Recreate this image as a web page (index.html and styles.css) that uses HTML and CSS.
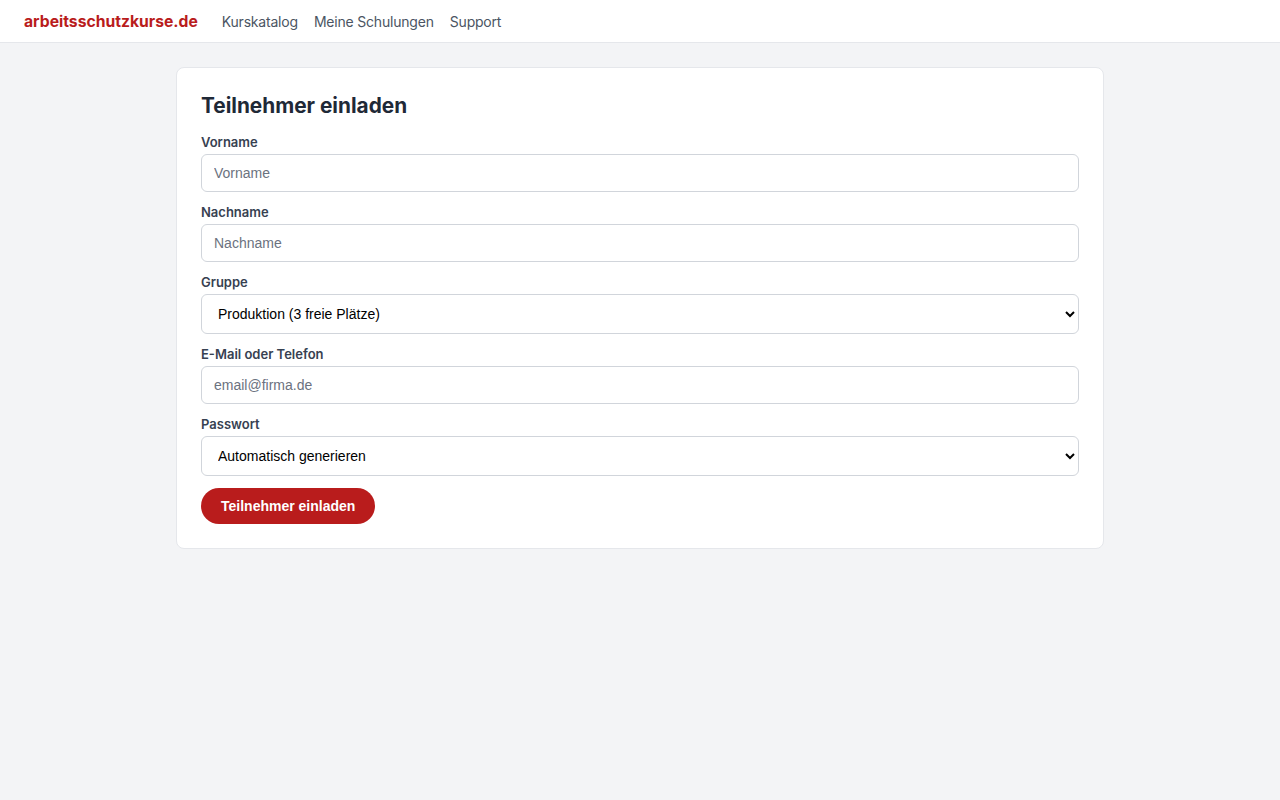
FILE: index.html
```html
<!DOCTYPE html>
<html lang="de">
<head>
<meta charset="utf-8">
<title>Teilnehmer einladen</title>
<link rel="stylesheet" href="styles.css">
</head>
<body>
<header class="topbar">
  <a class="logo" href="#">arbeitsschutzkurse.de</a>
  <nav class="nav">
    <a href="#">Kurskatalog</a>
    <a href="#">Meine Schulungen</a>
    <a href="#">Support</a>
  </nav>
</header>
<main class="main">
  <section class="card">
    <h1 class="title">Teilnehmer einladen</h1>
    <form class="form">
      <div class="field">
        <label class="label">Vorname</label>
        <input class="input" type="text" placeholder="Vorname">
      </div>
      <div class="field">
        <label class="label">Nachname</label>
        <input class="input" type="text" placeholder="Nachname">
      </div>
      <div class="field">
        <label class="label">Gruppe</label>
        <select class="select">
          <option>Produktion (3 freie Plätze)</option>
        </select>
      </div>
      <div class="field">
        <label class="label">E-Mail oder Telefon</label>
        <input class="input" type="text" placeholder="email@firma.de">
      </div>
      <div class="field">
        <label class="label">Passwort</label>
        <select class="select">
          <option>Automatisch generieren</option>
        </select>
      </div>
      <div class="actions">
        <button class="btn" type="button">Teilnehmer einladen</button>
      </div>
    </form>
  </section>
</main>
</body>
</html>
```

FILE: styles.css
```css
* { box-sizing: border-box; }
html, body { margin: 0; padding: 0; }
body {
  background: #f3f4f6;
  font-family: Inter, "Liberation Sans", sans-serif;
  color: #1f2937;
  min-height: 800px;
}
.topbar {
  background: #fff;
  border-bottom: 1px solid #e5e7eb;
  height: 43px;
  display: flex;
  align-items: center;
  padding: 0 24px;
  gap: 24px;
}
.logo {
  color: #b91c1c;
  font-weight: 700;
  font-size: 15.7px;
  text-decoration: none;
}
.nav { display: flex; gap: 16px; }
.nav a {
  color: #4b5563;
  font-size: 14px;
  letter-spacing: -0.2px;
  text-decoration: none;
}
.main {
  padding-top: 24px;
  display: flex;
  justify-content: center;
}
.card {
  width: 928px;
  background: #fff;
  border: 1px solid #e5e7eb;
  border-radius: 8px;
  padding: 24px 24px 24px;
}
.title {
  margin: 0 0 14px;
  font-size: 20.8px;
  line-height: 28px;
  font-weight: 700;
  color: #1f2937;
}
.form { display: flex; flex-direction: column; gap: 12px; }
.field { display: flex; flex-direction: column; gap: 4px; }
.label {
  font-size: 13px;
  line-height: 16px;
  font-weight: 600;
  color: #374151;
}
.input {
  height: 38px;
  border: 1px solid #d1d5db;
  border-radius: 6px;
  padding: 0 12px;
  font-family: "Liberation Sans", Arial, sans-serif;
  font-size: 14px;
  color: #111827;
  background: #fff;
}
.input::placeholder { color: #6b7280; }
.select {
  height: 40px;
  border: 1px solid #d1d5db;
  border-radius: 6px;
  padding: 0 12px;
  font-family: "Liberation Sans", Arial, sans-serif;
  font-size: 14px;
  color: #000;
  background: #fff;
}
.actions { display: flex; }
.btn {
  height: 36px;
  padding: 0 20px;
  border: none;
  border-radius: 999px;
  background: #b91c1c;
  color: #fff;
  font-family: "Liberation Sans", Arial, sans-serif;
  font-weight: 700;
  font-size: 14px;
}
```
